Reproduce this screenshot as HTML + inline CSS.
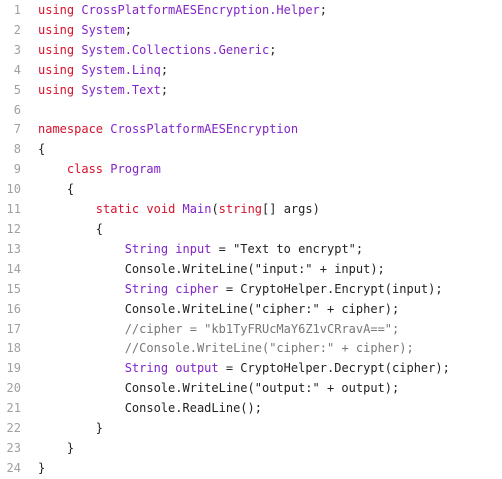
<!DOCTYPE html>
<html><head><meta charset="utf-8"><style>
html,body{margin:0;padding:0;background:#fff;width:502px;height:477px;overflow:hidden}
pre{margin:0;padding:0;font-family:"DejaVu Sans Mono","Liberation Mono",monospace;font-size:12px;line-height:19.9px;color:#222;position:absolute;top:1px;left:0}
.n{display:inline-block;width:21px;text-align:right;color:#a0a0a0;margin-right:17px}
.k{color:#d8102c}.t{color:#8224c8}.c{color:#777}
</style></head><body><pre>
<span class="n">1</span><span class="k">using</span> <span class="t">CrossPlatformAESEncryption.Helper</span>;
<span class="n">2</span><span class="k">using</span> <span class="t">System</span>;
<span class="n">3</span><span class="k">using</span> <span class="t">System.Collections.Generic</span>;
<span class="n">4</span><span class="k">using</span> <span class="t">System.Linq</span>;
<span class="n">5</span><span class="k">using</span> <span class="t">System.Text</span>;
<span class="n">6</span>
<span class="n">7</span><span class="k">namespace</span> <span class="t">CrossPlatformAESEncryption</span>
<span class="n">8</span>{
<span class="n">9</span>    <span class="k">class</span> <span class="t">Program</span>
<span class="n">10</span>    {
<span class="n">11</span>        <span class="k">static</span> <span class="k">void</span> <span class="t">Main</span>(<span class="k">string</span>[] args)
<span class="n">12</span>        {
<span class="n">13</span>            <span class="t">String input</span> = "Text to encrypt";
<span class="n">14</span>            Console.WriteLine("input:" + input);
<span class="n">15</span>            <span class="t">String cipher</span> = CryptoHelper.Encrypt(input);
<span class="n">16</span>            Console.WriteLine("cipher:" + cipher);
<span class="n">17</span>            <span class="c">//cipher = "kb1TyFRUcMaY6Z1vCRravA==";</span>
<span class="n">18</span>            <span class="c">//Console.WriteLine("cipher:" + cipher);</span>
<span class="n">19</span>            <span class="t">String output</span> = CryptoHelper.Decrypt(cipher);
<span class="n">20</span>            Console.WriteLine("output:" + output);
<span class="n">21</span>            Console.ReadLine();
<span class="n">22</span>        }
<span class="n">23</span>    }
<span class="n">24</span>}
</pre></body></html>
